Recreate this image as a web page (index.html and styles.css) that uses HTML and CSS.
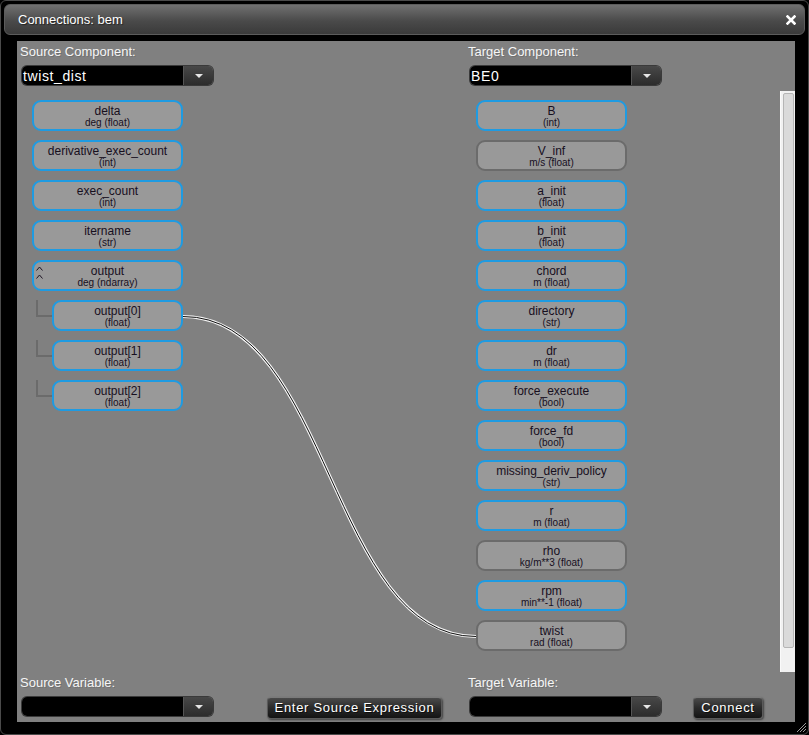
FILE: index.html
```html
<!DOCTYPE html>
<html>
<head>
<meta charset="utf-8">
<title>Connections: bem</title>
<link rel="stylesheet" href="styles.css">
</head>
<body>
<div class="dialog">
  <div class="titlebar">
    <span class="title">Connections: bem</span>
    <svg class="close" width="10" height="10" viewBox="0 0 10 10"><path d="M1.5 1.5 L8.5 8.5 M8.5 1.5 L1.5 8.5" stroke="#fff" stroke-width="2.6" stroke-linecap="square"/></svg>
  </div>
  <div class="panel">
    <div class="toprow">
      <div class="col">
        <div class="label">Source Component:</div>
        <div class="select"><div class="select-field">twist_dist</div><div class="select-btn"><span class="tri"></span></div></div>
      </div>
      <div class="col">
        <div class="label">Target Component:</div>
        <div class="select"><div class="select-field">BE0</div><div class="select-btn"><span class="tri"></span></div></div>
      </div>
    </div>
    <div class="middle">
      <div class="canvas">
        <div class="lists">
          <div class="list">
            <div class="node"><div class="name">delta</div><div class="type">deg (float)</div></div>
            <div class="node"><div class="name">derivative_exec_count</div><div class="type">(int)</div></div>
            <div class="node"><div class="name">exec_count</div><div class="type">(int)</div></div>
            <div class="node"><div class="name">itername</div><div class="type">(str)</div></div>
            <div class="node"><svg class="caret" width="7" height="14" viewBox="0 0 7 14"><path d="M0.5 4.5 L3.5 1 L6.5 4.5 M0.5 12.5 L3.5 9 L6.5 12.5" fill="none" stroke="#1d1424" stroke-width="1"/></svg><div class="name">output</div><div class="type">deg (ndarray)</div></div>
            <div class="node child"><div class="name">output[0]</div><div class="type">(float)</div></div>
            <div class="node child"><div class="name">output[1]</div><div class="type">(float)</div></div>
            <div class="node child"><div class="name">output[2]</div><div class="type">(float)</div></div>
          </div>
          <div class="list">
            <div class="node"><div class="name">B</div><div class="type">(int)</div></div>
            <div class="node off"><div class="name">V_inf</div><div class="type">m/s (float)</div></div>
            <div class="node"><div class="name">a_init</div><div class="type">(float)</div></div>
            <div class="node"><div class="name">b_init</div><div class="type">(float)</div></div>
            <div class="node"><div class="name">chord</div><div class="type">m (float)</div></div>
            <div class="node"><div class="name">directory</div><div class="type">(str)</div></div>
            <div class="node"><div class="name">dr</div><div class="type">m (float)</div></div>
            <div class="node"><div class="name">force_execute</div><div class="type">(bool)</div></div>
            <div class="node"><div class="name">force_fd</div><div class="type">(bool)</div></div>
            <div class="node"><div class="name">missing_deriv_policy</div><div class="type">(str)</div></div>
            <div class="node"><div class="name">r</div><div class="type">m (float)</div></div>
            <div class="node off"><div class="name">rho</div><div class="type">kg/m**3 (float)</div></div>
            <div class="node"><div class="name">rpm</div><div class="type">min**-1 (float)</div></div>
            <div class="node off"><div class="name">twist</div><div class="type">rad (float)</div></div>
          </div>
        </div>
        <svg class="wires" width="763" height="581" viewBox="0 0 763 581">
          <path d="M166 225.5 C313 225.5 313 545.5 459 545.5" fill="none" stroke="#f4f4f4" stroke-width="3.2"/>
          <path d="M166 225.5 C313 225.5 313 545.5 459 545.5" fill="none" stroke="#111" stroke-width="1"/>
        </svg>
      </div>
      <div class="scrollbar"><div class="thumb"></div></div>
    </div>
    <div class="bottomrow">
      <div class="col">
        <div class="label">Source Variable:</div>
        <div class="ctrl-row">
          <div class="select"><div class="select-field"></div><div class="select-btn"><span class="tri"></span></div></div>
          <button class="btn btn-expr">Enter Source Expression</button>
        </div>
      </div>
      <div class="col">
        <div class="label">Target Variable:</div>
        <div class="ctrl-row">
          <div class="select"><div class="select-field"></div><div class="select-btn"><span class="tri"></span></div></div>
          <button class="btn btn-connect">Connect</button>
        </div>
      </div>
    </div>
  </div>
  <svg class="grip" width="12" height="12" viewBox="0 0 12 12">
    <path d="M11 2 L2 11 M11 5 L5 11 M11 8 L8 11" stroke="#9a9a9a" stroke-width="1"/>
  </svg>
</div>
</body>
</html>
```

FILE: styles.css
```css
html, body {
  margin: 0;
  padding: 0;
  background: #000;
}

body {
  width: 809px;
  height: 735px;
  overflow: hidden;
  font-family: "Liberation Sans", Arial, sans-serif;
}

.dialog {
  position: relative;
  box-sizing: border-box;
  width: 809px;
  height: 735px;
  padding: 3px;
  border: 1px solid #4a4a4a;
  border-radius: 6px;
  background: #000;
}

.titlebar {
  box-sizing: border-box;
  height: 31px;
  display: flex;
  align-items: center;
  padding: 0 8px 0 13px;
  border: 1px solid #5c5c5c;
  border-radius: 6px;
  background: linear-gradient(#707070, #4a4a4a 55%, #3a3a3a);
}

.title {
  color: #fff;
  font-size: 13px;
  text-shadow: 1px 1px 1px rgba(0, 0, 0, 0.5);
}

.close {
  margin-left: auto;
  display: block;
}

.panel {
  margin: 6px 0 0 13px;
  width: 778px;
  height: 681px;
  background: #808080;
  display: flex;
  flex-direction: column;
}

.toprow, .bottomrow {
  display: grid;
  grid-template-columns: 448px 1fr;
  padding-left: 3px;
  height: 50px;
  box-sizing: border-box;
  padding-top: 3px;
}

.label {
  color: #f6f6f6;
  font-size: 13px;
  line-height: 16px;
  height: 16px;
  text-shadow: 1px 1px 0 rgba(0, 0, 0, 0.15);
}

.select {
  margin: 6px 0 0 2px;
  width: 191px;
  height: 19px;
  display: flex;
  border-radius: 5px;
  overflow: hidden;
  box-shadow: 0 0 0 1px #3a3a3a;
}

.select-field {
  flex: 1;
  background: #000;
  color: #fff;
  font-size: 14px;
  letter-spacing: 0.6px;
  line-height: 20px;
  padding-left: 1px;
  white-space: nowrap;
}

.select-btn {
  width: 29px;
  border-left: 1px solid #555;
  background: linear-gradient(#484848, #2c2c2c);
  display: flex;
  align-items: center;
  justify-content: center;
}

.tri {
  width: 0;
  height: 0;
  border-left: 4px solid transparent;
  border-right: 4px solid transparent;
  border-top: 4px solid #e6e6e6;
}

.middle {
  height: 581px;
  display: flex;
}

.canvas {
  position: relative;
  flex: 1;
  overflow: hidden;
}

.lists {
  display: grid;
  grid-template-columns: 444px 1fr;
  padding: 9px 0 0 15px;
}

.list {
  display: flex;
  flex-direction: column;
  gap: 9px;
}

.node {
  position: relative;
  box-sizing: border-box;
  width: 151px;
  height: 31px;
  border: 2px solid #1e9be2;
  border-radius: 9px;
  background: #999999;
  padding-top: 3px;
  text-align: center;
  color: #170f1e;
}

.node.off {
  border-color: #6b6b6b;
}

.node.child {
  margin-left: 20px;
  width: 131px;
}

.node.child::before {
  content: "";
  position: absolute;
  left: -18px;
  top: -2px;
  width: 14px;
  height: 15px;
  border-left: 2px solid #6b6b6b;
  border-bottom: 2px solid #6b6b6b;
}

.name {
  font-size: 12px;
  line-height: 13px;
  white-space: nowrap;
}

.type {
  font-size: 10px;
  line-height: 10px;
  white-space: nowrap;
}

.caret {
  position: absolute;
  left: 2px;
  top: 4px;
  display: block;
}

.wires {
  position: absolute;
  left: 0;
  top: 0;
  pointer-events: none;
}

.scrollbar {
  box-sizing: border-box;
  width: 15px;
  background: #f1f1f1;
  border-left: 1px solid #fafafa;
  padding: 2px 1px 0 2px;
  height: 581px;
}

.thumb {
  box-sizing: border-box;
  height: 555px;
  background: #dadada;
  border: 1px solid #b5b5b5;
  border-radius: 2px;
}

.bottomrow {
  height: 50px;
}

.ctrl-row {
  display: flex;
  align-items: flex-start;
}

.btn {
  margin-top: 6px;
  box-sizing: border-box;
  height: 22px;
  padding: 0;
  border: 1px solid #5a5a5a;
  border-top-color: #7a7a7a;
  border-radius: 4px;
  background: linear-gradient(#4a4a4a, #2a2a2a 50%, #141414);
  color: #fff;
  font-family: "Liberation Sans", Arial, sans-serif;
  font-size: 13px;
  letter-spacing: 0.7px;
  line-height: 20px;
  text-shadow: 1px 1px 0 rgba(0, 0, 0, 0.6);
  box-shadow: 1px 1px 2px rgba(0, 0, 0, 0.5);
}

.btn-expr {
  margin-left: 54px;
  width: 175px;
}

.btn-connect {
  margin-left: 32px;
  width: 70px;
}

.grip {
  position: absolute;
  right: 1px;
  bottom: 1px;
}
```
